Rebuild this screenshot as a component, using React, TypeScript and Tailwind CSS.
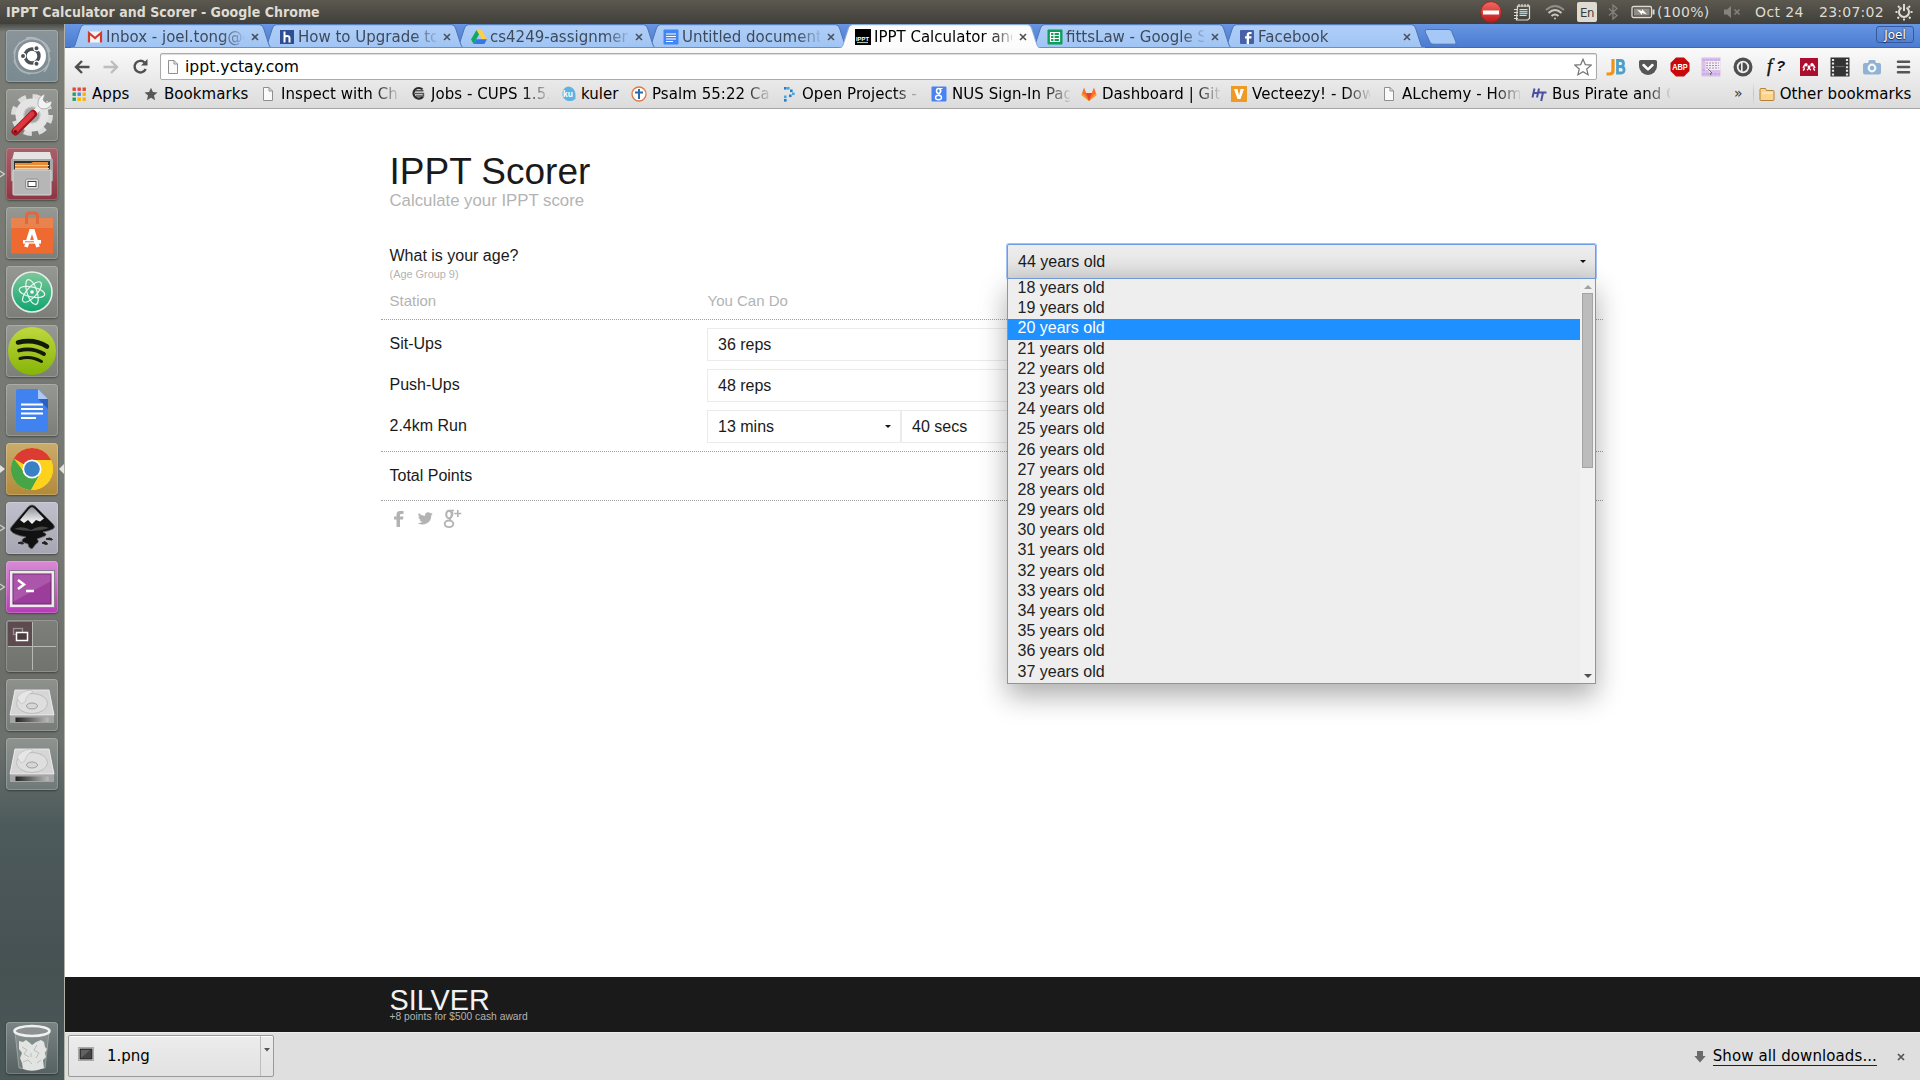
import React from "react";

const svgProps = { xmlns: "http://www.w3.org/2000/svg" };

/* ---------- small shared icons ---------- */
const PageIcon = () => (
  <svg {...svgProps} width="16" height="16" viewBox="0 0 16 16">
    <path d="M3.500 1.500h5.500l3.500 3.500v9.500h-9z" fill="#fafafa" stroke="#8f8f8f" />
    <path d="M9 1.500V5h3.500" fill="none" stroke="#8f8f8f" />
  </svg>
);
const GmailIcon = () => (
  <svg {...svgProps} width="16" height="16" viewBox="0 0 16 16">
    <rect x="1" y="2.500" width="14" height="11" rx="1" fill="#f3f3f3" />
    <path d="M2 13.500V4l6 5 6-5v9.500" fill="none" stroke="#d6382c" strokeWidth="2.200" />
  </svg>
);
const HIcon = () => (
  <svg {...svgProps} width="16" height="16" viewBox="0 0 16 16">
    <rect x="1" y="1" width="14" height="14" fill="#2f4d93" />
    <path d="M5.500 2.500v11M5.500 9q0-2 2.500-2t2.500 2v4.500" fill="none" stroke="#fff" strokeWidth="2" />
  </svg>
);
const DriveIcon = () => (
  <svg {...svgProps} width="16" height="16" viewBox="0 0 16 16">
    <path d="M5.500 1h5L16 10h-5z" fill="#ffcf48" />
    <path d="M5.500 1 8 5.500 2.600 15 0 10.500z" fill="#11a861" />
    <path d="M5.300 10.300H16L13.400 15H2.600z" fill="#3777e3" />
  </svg>
);
const DocIcon = () => (
  <svg {...svgProps} width="16" height="16" viewBox="0 0 16 16">
    <rect x="0.500" y="0.500" width="15" height="15" rx="1" fill="#4285f4" />
    <path d="M3 5h10M3 7.500h10M3 10h10M3 12.500h7" stroke="#fff" strokeWidth="1.200" />
  </svg>
);
const IpptIcon = () => (
  <svg {...svgProps} width="16" height="16" viewBox="0 0 16 16">
    <rect width="16" height="16" fill="#000" />
    <text x="1" y="12" fontSize="6" fontWeight="bold" fill="#fff" fontFamily="Liberation Sans" textLength="13" lengthAdjust="spacingAndGlyphs">IPPT</text>
    <path d="M2 13.500h11" stroke="#bbb" strokeWidth="1.200" />
  </svg>
);
const SheetIcon = () => (
  <svg {...svgProps} width="16" height="16" viewBox="0 0 16 16">
    <rect x="0.500" y="0.500" width="15" height="15" rx="1" fill="#0f9d58" />
    <path d="M3.500 3.500h9v9h-9zM3.500 6.500h9M3.500 9.500h9M7 3.500v9" fill="none" stroke="#fff" strokeWidth="1.200" />
  </svg>
);
const FbIcon = () => (
  <svg {...svgProps} width="16" height="16" viewBox="0 0 16 16">
    <rect x="1" y="1" width="14" height="14" rx="1" fill="#4860a5" />
    <path d="M10 15V9.500h2.300l.3-2.200H10V6q0-1 1.100-1h1.500V3h-2Q7.700 3 7.700 5.700v1.600H6v2.200h1.700V15z" fill="#fff" />
  </svg>
);

/* ---------- bookmark icons ---------- */
const AppsIcon = () => (
  <svg {...svgProps} width="16" height="16" viewBox="0 0 16 16">
    {["#e8453c", "#e8453c", "#e8453c", "#1ba261", "#4688f1", "#f7b500", "#1ba261", "#f7b500", "#f7b500"].map((c, i) => (
      <rect key={i} x={1.5 + (i % 3) * 5} y={1.5 + Math.floor(i / 3) * 5} width="3.400" height="3.400" fill={c} />
    ))}
  </svg>
);
const StarIcon = () => (
  <svg {...svgProps} width="16" height="16" viewBox="0 0 16 16">
    <path d="m8 1.800 1.900 4.300 4.600.4-3.500 3.100 1.100 4.600L8 11.800l-4.100 2.400L5 9.600 1.500 6.500l4.600-.4z" fill="#575757" />
  </svg>
);
const CupsIcon = () => (
  <svg {...svgProps} width="16" height="16" viewBox="0 0 16 16">
    <path d="M12.500 3.500A5.300 5.300 0 1 0 13 10.500" fill="none" stroke="#2a2a2a" strokeWidth="2.200" />
    <path d="M5 4.800h8.500M5 7.500h8.500v2.500H6" fill="none" stroke="#555" strokeWidth="1.400" />
  </svg>
);
const KulerIcon = () => (
  <svg {...svgProps} width="16" height="16" viewBox="0 0 16 16">
    <path d="M8 .5a7.500 7.500 0 0 1 7.500 7.500v5L12 15H8A7.500 7.500 0 0 1 8 .500z" fill="#5eb3e0" />
    <text x="3" y="11" fontSize="8.500" fontWeight="bold" fill="#fff" fontFamily="Liberation Sans">ku</text>
  </svg>
);
const PsalmIcon = () => (
  <svg {...svgProps} width="16" height="16" viewBox="0 0 16 16">
    <circle cx="8" cy="8" r="7" fill="#fff" stroke="#e07842" strokeWidth="1.300" />
    <path d="M8 3v10M4 6.500h8" stroke="#2a6aa8" strokeWidth="2" />
  </svg>
);
const ProjectsIcon = () => (
  <svg {...svgProps} width="16" height="16" viewBox="0 0 16 16">
    {[[3, 1], [6, 1], [9, 3.500], [11, 6.500], [8, 8.500], [3, 9.500], [3, 13]].map(([x, y], i) => (
      <rect key={i} x={x} y={y} width="2.600" height="2.600" fill={i % 2 ? "#48a4e4" : "#2080cf"} />
    ))}
  </svg>
);
const GoogleIcon = () => (
  <svg {...svgProps} width="16" height="16" viewBox="0 0 16 16">
    <rect x="0.500" y="0.500" width="15" height="15" rx="1" fill="#4a83f0" />
    <g fill="none" stroke="#fff">
      <ellipse cx="7.500" cy="5" rx="2" ry="2.400" strokeWidth="1.500" />
      <path d="M7.500 2.500h4M9.500 3.500q1.200 2-.8 3.600-1.200 1-.2 2" strokeWidth="1.100" />
      <ellipse cx="7.500" cy="11.500" rx="3" ry="2.200" strokeWidth="1.400" />
    </g>
  </svg>
);
const GitlabIcon = () => (
  <svg {...svgProps} width="16" height="16" viewBox="0 0 16 16">
    <path d="M3 1.500 5.200 7h5.600L13 1.500 15.500 9 8 15 .5 9z" fill="#fc6d26" />
    <path d="M5.200 7h5.600L8 15z" fill="#e24329" />
    <path d="M.5 9 8 15 2 7.500zM15.500 9 8 15l6-7.500z" fill="#fca326" />
  </svg>
);
const VecIcon = () => (
  <svg {...svgProps} width="16" height="16" viewBox="0 0 16 16">
    <rect width="16" height="16" fill="#ee9a24" />
    <path d="M3 3h3.500L8 9.500 9.500 3H13L9.500 13h-3z" fill="#fff" />
  </svg>
);
const HtIcon = () => (
  <svg {...svgProps} width="16" height="16" viewBox="0 0 16 16" fill="none" stroke="#4a4fa3" strokeWidth="2">
    <path d="M3.500 2.500 1.500 11.500M8 2.500 6 11.500M2.500 7h5M8 6.500h7.500M12 6.500l-1.800 8.500" />
  </svg>
);

const tabs = [
  { title: "Inbox - joel.tong@gmail", icon: <GmailIcon /> },
  { title: "How to Upgrade to", icon: <HIcon /> },
  { title: "cs4249-assignment", icon: <DriveIcon /> },
  { title: "Untitled document", icon: <DocIcon /> },
  { title: "IPPT Calculator and", icon: <IpptIcon />, active: true },
  { title: "fittsLaw - Google Sheets", icon: <SheetIcon /> },
  { title: "Facebook", icon: <FbIcon /> },
];

const bookmarks = [
  { title: "Apps", icon: <AppsIcon />, w: "w-[72px]" },
  { title: "Bookmarks", icon: <StarIcon />, w: "w-[117px]" },
  { title: "Inspect with Chrome", icon: <PageIcon />, w: "w-[150px]", fade: true },
  { title: "Jobs - CUPS 1.5.3", icon: <CupsIcon />, w: "w-[150px]", fade: true },
  { title: "kuler", icon: <KulerIcon />, w: "w-[71px]" },
  { title: "Psalm 55:22 Cast", icon: <PsalmIcon />, w: "w-[150px]", fade: true },
  { title: "Open Projects - A", icon: <ProjectsIcon />, w: "w-[150px]", fade: true },
  { title: "NUS Sign-In Page", icon: <GoogleIcon />, w: "w-[150px]", fade: true },
  { title: "Dashboard | GitLab", icon: <GitlabIcon />, w: "w-[150px]", fade: true },
  { title: "Vecteezy! - Download", icon: <VecIcon />, w: "w-[150px]", fade: true },
  { title: "ALchemy - Home", icon: <PageIcon />, w: "w-[150px]", fade: true },
  { title: "Bus Pirate and Core", icon: <HtIcon />, w: "w-[150px]", fade: true },
];

/* ---------- top panel ---------- */
const SystemPanel = () => (
  <header className="flex h-6 shrink-0 items-center bg-gradient-to-b from-[#5b594f] to-[#403f3a] pl-[6px] text-[#dfdbd2]">
    <span className="font-['DejaVu_Sans_Condensed','DejaVu_Sans',sans-serif] text-sm font-bold leading-6 tracking-[0.03px] whitespace-nowrap [font-stretch:condensed]">
      IPPT Calculator and Scorer - Google Chrome
    </span>
    <div className="ml-auto flex h-6 w-[440px] items-center text-sm tracking-[0.250px] whitespace-nowrap">
      <svg {...svgProps} width="22" height="22" viewBox="0 0 22 22">
        <defs>
          <linearGradient id="stop" x1="0" y1="0" x2="0" y2="1">
            <stop offset="0" stopColor="#ee6a62" />
            <stop offset="1" stopColor="#c01a1a" />
          </linearGradient>
        </defs>
        <circle cx="11" cy="11" r="10.300" fill="url(#stop)" stroke="#b31b1b" strokeWidth=".8" />
        <rect x="3" y="9.500" width="16" height="4" fill="#fff" />
      </svg>
      <svg {...svgProps} className="ml-[11px]" width="18" height="18" viewBox="0 0 18 18">
        <path d="M4.500 3h12v12.500L14.500 17H3.500z" fill="none" stroke="#dfdbd2" strokeWidth="1.200" />
        <path d="M6 1v3M9 1v3M12 1v3M15 1v3" stroke="#dfdbd2" strokeWidth="1.200" />
        <path d="M6.500 6.500h8M6.500 12.500h7" stroke="#dfdbd2" strokeWidth="1" />
        <path d="M6.500 8.500h8M6.500 10.500h8" stroke="#9ed3de" strokeWidth="1.300" />
        <path d="M1 6.500h4M1 9.500h4M1 12.500h4M1 15.500h4" stroke="#dfdbd2" strokeWidth="1" />
      </svg>
      <svg {...svgProps} className="ml-[13px]" width="22" height="18" viewBox="0 0 22 18" fill="none" stroke="#cbc8be" strokeWidth="2">
        <path d="M2 7Q11-1 20 7" stroke="#8f8d85" />
        <path d="M4.500 10Q11 4 17.500 10" />
        <path d="M7.500 13Q11 10 14.500 13" />
        <circle cx="11" cy="15.500" r="1" fill="#cbc8be" stroke="none" />
      </svg>
      <span className="ml-[11px] flex h-5 w-5 items-center justify-center rounded-[2px] bg-[#dfdbd2] text-[13px] leading-none tracking-tight text-[#3c3b37] font-['DejaVu_Sans_Condensed']">
        En
      </span>
      <svg {...svgProps} className="ml-[11px]" width="10" height="16" viewBox="0 0 10 16" fill="none" stroke="#85837b" strokeWidth="1.300">
        <path d="m1 4.500 8 7L5 15V1l4 3.500-8 7" />
      </svg>
      <svg {...svgProps} className="ml-[13px]" width="24" height="14" viewBox="0 0 24 14">
        <rect x="1" y="1.500" width="19.500" height="11" rx="1.500" fill="none" stroke="#dfdbd2" strokeWidth="1.300" />
        <rect x="3" y="3.500" width="15.500" height="7" fill="#908d84" />
        <rect x="21.500" y="4.500" width="2" height="5" fill="#dfdbd2" />
        <path d="m6 4.500 5 1.500V4l5 5.500-5-1.500v2z" fill="#fff" />
      </svg>
      <span className="ml-[2px] w-[58px]">(100%)</span>
      <svg {...svgProps} className="ml-[8px]" width="18" height="14" viewBox="0 0 18 14">
        <path d="M1 4.500h3l4-3.500v12L4 9.500H1z" fill="#85837b" />
        <path d="m11.500 4.500 5 5m0-5-5 5" stroke="#85837b" strokeWidth="1.500" />
      </svg>
      <span className="ml-[14px] w-16 tracking-[0.400px]">Oct 24</span>
      <span className="w-[76px]">23:07:02</span>
      <svg {...svgProps} width="18" height="18" viewBox="0 0 18 18" fill="none" stroke="#dfdbd2">
        <path d="M6.500 4.700a5 5 0 1 0 5 0" strokeWidth="2" />
        <path d="M9 1v7" strokeWidth="2" />
        <path d="M2.500 9H.5M17.500 9h-2M9 15.500V17.500M4 14l-1.500 1.500M14 14l1.500 1.500M3 3l1.600 1.600M15 3l-1.600 1.600" strokeWidth="2" />
      </svg>
    </div>
  </header>
);

/* ---------- launcher ---------- */
const UbuntuArt = () => (
  <g>
    <path d="M8 24C10 6 38 2 44 22M44 28C42 46 14 50 8 30M20 8c20-4 30 20 18 34M14 12c-10 12-6 30 10 32" fill="none" stroke="#fff" strokeOpacity=".35" strokeWidth="1.500" />
    <circle cx="26" cy="26" r="14" fill="#fff" />
    <circle cx="26" cy="26" r="7" fill="none" stroke="#4a5258" strokeWidth="3.400" />
    <g fill="#4a5258" stroke="#fff" strokeWidth="1.200">
      <circle cx="17" cy="26" r="2.600" />
      <circle cx="30.500" cy="18.200" r="2.600" />
      <circle cx="30.500" cy="33.800" r="2.600" />
    </g>
  </g>
);
const SettingsArt = () => (
  <g>
    <circle cx="26" cy="26" r="18.500" fill="none" stroke="#dcdcdc" strokeWidth="5" strokeDasharray="8 6.530" />
    <circle cx="26" cy="26" r="12.500" fill="#b9b9b9" stroke="#e4e4e4" strokeWidth="8" />
    <circle cx="26" cy="26" r="8" fill="#a5a5a5" stroke="#c9c9c9" />
    <path d="m25 27 11-11" stroke="#eee" strokeWidth="5" />
    <path d="M32 13q1-6 7-8l-2 6 3 3 6-2q-1 8-9 8-6-1-5-7z" fill="#f2f2f2" stroke="#999" strokeWidth=".7" />
    <path d="M9.500 42.500 27 25" stroke="#a8141c" strokeWidth="8" strokeLinecap="round" />
    <path d="M9.500 41.500 26 25" stroke="#da3840" strokeWidth="5" strokeLinecap="round" />
    <circle cx="9.500" cy="42.500" r="1.600" fill="#6d0c10" />
  </g>
);
const FilesArt = () => (
  <g>
    <path d="M8 4h36l3 12H5z" fill="#e4e4e4" />
    <rect x="5" y="11" width="42" height="22" fill="#a8a8a8" />
    <rect x="8" y="13" width="36" height="10" fill="#33302c" />
    <path d="M9 15h16l2-1h15v9H9z" fill="#e88b37" />
    <path d="M9 17.500h34M9 20.500h34" stroke="#fbd5a8" />
    <rect x="7" y="22" width="38" height="25" rx="1" fill="#b6b6b6" stroke="#d9d9d9" />
    <rect x="19.500" y="31" width="13" height="10" rx="2" fill="#ddd" stroke="#909090" />
    <rect x="22" y="33.500" width="8" height="5" fill="#fff" stroke="#444" />
  </g>
);
const SoftwareArt = () => (
  <g>
    <path d="M5 11h42v35.500H5z" fill="#ef6a30" />
    <path d="M5 11h42v10H5z" fill="#e8824f" />
    <path d="M20.500 17V9q0-3 3-3h5q3 0 3 3v8" fill="none" stroke="#e0683c" strokeWidth="3" />
    <path d="m20 40 5-16h2l5 16" fill="none" stroke="#fff" strokeWidth="3.800" />
    <rect x="17" y="33" width="18" height="3.600" fill="#fff" />
    <path d="M19 34.800h9" stroke="#ef6a30" />
  </g>
);
const AtomArt = () => (
  <g>
    <circle cx="26" cy="26" r="20" fill="url(#atom)" stroke="#e8eeea" strokeWidth="1.600" />
    <g fill="none" stroke="#e6f7ee" strokeWidth="1.200">
      <ellipse cx="26" cy="26" rx="13" ry="5" transform="rotate(12 26 26)" />
      <ellipse cx="26" cy="26" rx="13" ry="5" transform="rotate(72 26 26)" />
      <ellipse cx="26" cy="26" rx="13" ry="5" transform="rotate(132 26 26)" />
    </g>
    <circle cx="26" cy="26" r="1.800" fill="#fff" />
  </g>
);
const SpotifyArt = () => (
  <g>
    <circle cx="26" cy="26" r="24" fill="url(#spot)" />
    <g fill="none" stroke="#141a05" strokeLinecap="round">
      <path d="M12 17.500q16-4 29 4" strokeWidth="4.600" />
      <path d="M13 25.500q13-3.500 25 3.500" strokeWidth="3.800" />
      <path d="M14 33.500q11-3 21.500 3" strokeWidth="3" />
    </g>
  </g>
);
const DocsArt = () => (
  <g>
    <path d="M12 5h20l10 10v31q0 1.500-1.500 1.500h-29Q10 47.500 10 46V7q0-2 2-2z" fill="#3f82f0" />
    <path d="M32 5l10 10H32z" fill="#a9c8fb" />
    <path d="M32 15h10v10z" fill="#2a62c4" />
    <path d="M15 20.500h22M15 25h22M15 29.500h22M15 34h15" stroke="#fff" strokeWidth="2.200" />
  </g>
);
const ChromeArt = () => (
  <g>
    <circle cx="26" cy="26" r="21" fill="#fdd21c" />
    <path d="M26 26 7.800 15.500a21 21 0 0 1 36.400 0L45 17H26z" fill="#db3b32" />
    <path d="M7.800 15.500A21 21 0 0 0 25 47l9.500-17L26 26l-8 3z" fill="#46a546" />
    <path d="M45 17H26l8 14-9 16A21 21 0 0 0 45 17z" fill="#fdd21c" />
    <circle cx="26" cy="26" r="9.600" fill="#fff" />
    <circle cx="26" cy="26" r="7.800" fill="#3b7fc4" />
  </g>
);
const InkscapeArt = () => (
  <g>
    <path d="M26 3q2 0 4 2l17 17q3 3 0 5-4 2-10 3 5 2 2 4l-8 3q3 3-1 5l-4 5q-4-1-4-5l-6-2q-1-3 4-5-12-2-15-6-2-2 1-5L22 5q2-2 4-2z" fill="#111" stroke="#666" strokeWidth=".8" />
    <path d="M26 5q1 0 3 2l9 9.500-4 3-4-1.500-4 4-4-4-4 3-4-3 9-11q2-2 3-2z" fill="url(#peak)" />
    <path d="M8 27q8-4 17 1 10-6 18-2-8 3-17 3T8 27z" fill="#444" />
    <path d="M12 41q3-2 5 0t-5 0zM36 41q3-3 5 0t-5 0zM40 37q4-2 6 0t-6 0z" fill="#222" stroke="#222" />
  </g>
);
const TerminalArt = () => (
  <g>
    <rect x="3.500" y="9.500" width="45" height="37" fill="#f0e7f0" stroke="#8b7c8b" />
    <rect x="7" y="13" width="38" height="30" fill="#9b3d9b" stroke="#6b296b" />
    <path d="M7.500 13.500h37v7l-37 20z" fill="#b668b6" opacity=".6" />
    <path d="m12 19 6 4.500-6 4.500M20 30h8" fill="none" stroke="#fff" strokeWidth="2.500" />
  </g>
);
const WorkspaceArt = () => (
  <g>
    <rect x="2" y="2" width="24" height="24" fill="#5d4b50" />
    <path d="M26.500 2v48M2 26.500h48" stroke="#b9b9b4" strokeWidth="1" />
    <rect x="7.500" y="8.500" width="9" height="6" fill="none" stroke="#9c9094" strokeWidth="1.300" />
    <rect x="10.500" y="12.500" width="11" height="8" fill="#4b3b40" stroke="#fff" strokeWidth="1.500" />
  </g>
);
const DriveArt = () => (
  <g>
    <path d="M9 11h34l5 25v8H4v-8z" fill="#bdbdbd" />
    <path d="M9 11h34l5 25H4z" fill="#d6d6d6" stroke="#f2f2f2" strokeWidth=".8" />
    <ellipse cx="26" cy="24.500" rx="15.500" ry="10" fill="#dedede" stroke="#bcbcbc" />
    <ellipse cx="26" cy="27" rx="5.500" ry="3" fill="#d6d6d6" stroke="#9e9e9e" />
    <path d="M11 19q4-7 14-8l2 2q-7 3-8 10l-4 2z" fill="#e6e6e6" stroke="#bababa" strokeWidth=".6" />
    <path d="M4 36.500h44v7.500H4z" fill="#a5a5a5" />
    <path d="M9.500 38.500h33V43h-33z" fill="url(#slot)" />
  </g>
);
const TrashArt = () => (
  <g>
    <path d="m9 10 4 36q13 3 26 0l4-36z" fill="#fff" fillOpacity=".15" stroke="#a8adad" strokeWidth=".8" />
    <path d="m13 19 4 1 3-2 4 3 2 2 4-3 5-2 3 2 1 5 2 2-2 4 1 4-3 3 1 8-6 2q-8 2-15-1l-1-6-2-5 2-5-3-4z" fill="#e2e4e1" />
    <path d="m16 25 5 3-3 4 5 3M31 23l-3 5 5 3-3 5M17 40l5-2 4 4M31 41l4-3M25 31v4" fill="none" stroke="#b9bdb9" strokeWidth="1" />
    <ellipse cx="26" cy="9" rx="17.500" ry="5" fill="#8c9292" stroke="#f0f0ee" strokeWidth="2.600" />
  </g>
);

const tiles = [
  { art: <UbuntuArt />, bg: "from-[#8a9499] to-[#798a91]" },
  { art: <SettingsArt />, bg: "from-[#969893] to-[#7b7e79]" },
  { art: <FilesArt />, bg: "from-[#a8606a] to-[#8e3543]", open: true },
  { art: <SoftwareArt />, bg: "from-[#969893] to-[#7b7e79]" },
  { art: <AtomArt />, bg: "from-[#969893] to-[#7b7e79]" },
  { art: <SpotifyArt />, bg: "from-[#969893] to-[#7b7e79]" },
  { art: <DocsArt />, bg: "from-[#969893] to-[#7b7e79]" },
  { art: <ChromeArt />, bg: "from-[#cbac6c] to-[#b28a3a]", focus: true },
  { art: <InkscapeArt />, bg: "from-[#c0c1cc] to-[#a5a6b1]", open: true },
  { art: <TerminalArt />, bg: "from-[#d88ad6] to-[#b43cb4]", open: true },
  { art: <WorkspaceArt />, bg: "from-[#7d7f7a] to-[#71736e]" },
  { art: <DriveArt />, bg: "from-[#8e918c] to-[#787d79]" },
  { art: <DriveArt />, bg: "from-[#8e938f] to-[#6f7a78]" },
];

const Tile = ({ art, bg, open, focus }: { art: React.ReactNode; bg: string; open?: boolean; focus?: boolean }) => (
  <div className="flex h-[52px] w-full items-center">
    <svg {...svgProps} width="6" height="12" viewBox="0 0 6 12">
      {open && <path d="M-1 2.500 4.500 6-1 9.500" fill="none" stroke="#d6d6d2" strokeWidth="1.200" />}
      {focus && <path d="M0 2 5 6 0 10z" fill="#e2e2de" />}
    </svg>
    <div className={`h-[52px] w-[52px] overflow-hidden rounded-[4px] bg-gradient-to-b ring-1 ring-inset ring-white/20 shadow-[0_1px_2px_rgba(0,0,0,0.4)] ${bg}`}>
      <svg {...svgProps} width="52" height="52" viewBox="0 0 52 52">{art}</svg>
    </div>
    {focus && (
      <svg {...svgProps} width="6" height="12" viewBox="0 0 6 12">
        <path d="M6 1 1 6l5 5z" fill="#e2e2de" />
      </svg>
    )}
  </div>
);

const Launcher = () => (
  <aside className="flex w-[65px] shrink-0 flex-col gap-[7px] border-r border-[#b3b0a6] bg-[linear-gradient(to_bottom,#4a4c48_0,#797d76_8px,#757872_50%,#6c6e69_62%,#6b716d_68%,#4d5a5b_76%,#465152_90%,#4b5858_100%)] pt-[6px] pb-[6px]">
    <svg {...svgProps} width="0" height="0" className="absolute">
      <defs>
        <linearGradient id="atom" x1="0" y1="0" x2="0" y2="1">
          <stop offset="0" stopColor="#7fc89a" />
          <stop offset="1" stopColor="#0ea470" />
        </linearGradient>
        <linearGradient id="spot" x1="0" y1="0" x2="0" y2="1">
          <stop offset="0" stopColor="#bfd83c" />
          <stop offset="1" stopColor="#86b408" />
        </linearGradient>
        <linearGradient id="peak" x1="0" y1="0" x2="0" y2="1">
          <stop offset="0" stopColor="#8d9198" />
          <stop offset="1" stopColor="#fff" />
        </linearGradient>
        <linearGradient id="slot">
          <stop offset="0" stopColor="#222" />
          <stop offset="1" stopColor="#bbb" />
        </linearGradient>
      </defs>
    </svg>
    {tiles.map((t, i) => (
      <Tile key={i} {...t} />
    ))}
    <div className="mt-auto">
      <Tile art={<TrashArt />} bg="from-[#7b8484] to-[#566162]" />
    </div>
  </aside>
);

/* ---------- browser chrome ---------- */
const Tab = ({ title, icon, active, z }: { title: string; icon: React.ReactNode; active?: boolean; z: number }) => (
  <div className="relative -mr-[10px] h-6 w-[202px] shrink-0" style={{ zIndex: active ? 20 : z }}>
    <svg {...svgProps} className="absolute inset-0" width="202" height="24" viewBox="0 0 202 24">
      <defs>
        <linearGradient id="tabfill" x1="0" y1="0" x2="0" y2="1">
          <stop offset="0" stopColor="#b0cff8" />
          <stop offset="1" stopColor="#9fc4f4" />
        </linearGradient>
      </defs>
      <path
        d="M0 24.500Q3 24 4 21L9.500 4Q10.500.7 13.500.7h175Q191.500.7 192.500 4L198 21q1 3 4 3.500"
        fill={active ? "#fcfcfc" : "url(#tabfill)"}
        stroke={active ? "#8aa9dc" : "#4e74b5"}
        strokeWidth="1"
      />
      {!active && <path d="M0 23.500h202" stroke="#6f8fbd" />}
    </svg>
    <div className="relative flex h-full items-center pt-px pl-4">
      {icon}
      <span
        className={`ml-[3px] h-[22px] w-[138px] overflow-hidden text-[15px] leading-[23px] whitespace-nowrap [mask-image:linear-gradient(to_right,#000_116px,transparent_142px)] ${active ? "text-black" : "text-[#3e4a5c]"}`}
      >
        {title}
      </span>
      <svg {...svgProps} className="ml-[6px]" width="10" height="10" viewBox="0 0 10 10">
        <path d="m2 2 6 6m0-6L2 8" stroke="#4a4f58" strokeWidth="1.600" />
      </svg>
    </div>
  </div>
);

const TabStrip = () => (
  <div className="flex h-6 bg-gradient-to-b from-[#6795e3] to-[#4a7bd0] pl-[6px] shadow-[inset_0_-1px_0_#3f68ad]">
    {tabs.map((t, i) => (
      <Tab key={t.title} {...t} z={10 - i} />
    ))}
    <svg {...svgProps} className="mt-[5px] ml-[9px]" width="33" height="16" viewBox="0 0 33 16">
      <path d="M3 .5h22q2 0 2.700 2L32 13q.5 2.200-1.500 2.200H9q-2 0-3-2L1.200 3Q.5.5 3 .5z" fill="#a6c8f6" stroke="#4e74b5" />
    </svg>
    <div className="mt-[2px] mr-[6px] ml-auto flex h-[17px] w-[38px] items-center justify-center rounded-[3px] border border-[#35599c] pt-px text-[12px] leading-none text-white [text-shadow:0_0_2px_#1b2f55,0_1px_1px_#1b2f55]">
      Joel
    </div>
  </div>
);

const Extensions = () => (
  <div className="flex h-5 w-[306px] items-center justify-between">
    <svg {...svgProps} width="20" height="20" viewBox="0 0 20 20" fill="none" strokeWidth="3.200">
      <path d="M7 2v11.500Q7 17 3.500 17H.5" stroke="#ef9414" />
      <path d="M11.500 3.500h3q3 0 3 2.900t-3 3h-3zM11.500 9.500h3.300q3.300 0 3.300 3.300t-3.300 3.200h-3.300z" stroke="#4ba0cc" strokeWidth="2.800" />
    </svg>
    <svg {...svgProps} width="20" height="20" viewBox="0 0 20 20">
      <path d="M2.500 3h15q1.500 0 1.500 1.500V9a9 9 0 0 1-18 0V4.500Q1 3 2.500 3z" fill="#565656" />
      <path d="m5.500 8 4.500 4.300L14.500 8" fill="none" stroke="#fff" strokeWidth="2.500" strokeLinecap="round" strokeLinejoin="round" />
    </svg>
    <svg {...svgProps} width="20" height="20" viewBox="0 0 20 20">
      <path d="M6 .5h8L19.500 6v8L14 19.500H6L.5 14V6z" fill="#c90909" />
      <text x="2.200" y="13.200" fontSize="8.500" fontWeight="bold" fill="#fff" fontFamily="Liberation Sans" textLength="15.500" lengthAdjust="spacingAndGlyphs">ABP</text>
    </svg>
    <svg {...svgProps} width="20" height="20" viewBox="0 0 20 20">
      <rect x=".5" y=".5" width="19" height="19" fill="#d9c0ec" />
      <path d="M1 3h18M1 17h18M1 13h4" stroke="#ccaee4" strokeWidth="2" strokeDasharray="3 1" />
      <rect x="4.500" y="4" width="15" height="9" fill="#f3ecf8" />
      <path d="M5 6h13M5 8.500h13M5 11h13" stroke="#999" strokeDasharray="2 1" />
      <path d="m7 12 4 4-2 .3 1 2" fill="#fff" stroke="#555" strokeWidth=".8" />
    </svg>
    <svg {...svgProps} width="20" height="20" viewBox="0 0 20 20">
      <circle cx="10" cy="10" r="9.500" fill="#4f4f4f" />
      <circle cx="10" cy="10" r="5.300" fill="none" stroke="#efefef" strokeWidth="1.800" />
      <path d="M8.800 5v10" stroke="#efefef" strokeWidth="1.600" />
    </svg>
    <svg {...svgProps} width="22" height="20" viewBox="0 0 22 20">
      <text x="2" y="15" fontSize="19" fontStyle="italic" fill="#111" stroke="#111" strokeWidth=".4" fontFamily="Liberation Serif">f</text>
      <text x="11" y="14" fontSize="15" fontStyle="italic" fontWeight="bold" fill="#111" fontFamily="Liberation Sans">?</text>
    </svg>
    <svg {...svgProps} width="20" height="20" viewBox="0 0 20 20">
      <rect x="1" y="1" width="18" height="18" fill="#ac0f2d" />
      <path d="M4 13.500q1.500-1 1.500-3M16 13.500q-1.500-1-1.500-3M8 13q2-1 2-3 0 2 2 3" fill="none" stroke="#fff" strokeWidth="1.400" />
      <circle cx="7" cy="7.800" r="1.700" fill="#fff" />
      <circle cx="13" cy="7.800" r="1.700" fill="#fff" />
      <circle cx="10" cy="9.800" r="1.500" fill="#fff" />
      <path d="M4 11q1-3 3-3M16 11q-1-3-3-3" fill="none" stroke="#fff" strokeWidth="1.300" />
    </svg>
    <svg {...svgProps} width="20" height="20" viewBox="0 0 20 20">
      <rect x=".5" y=".5" width="19" height="19" fill="#333" />
      <path d="M3 2v17M17 2v17" stroke="#e6e6e6" strokeWidth="2.200" strokeDasharray="2 1.600" />
      <path d="M5.500 9.500h9" stroke="#666" />
    </svg>
    <svg {...svgProps} width="20" height="20" viewBox="0 0 20 20">
      <path d="M3 6h3l1-3h6l1 3h3q2 0 2 2v7.500q0 2-2 2H3q-2 0-2-2V8q0-2 2-2z" fill="#90b2d5" />
      <circle cx="10" cy="11" r="3.300" fill="none" stroke="#f3f6fa" strokeWidth="2.200" />
    </svg>
    <svg {...svgProps} width="18" height="18" viewBox="0 0 18 18">
      <path d="M4 3.800h11M4 9h11M4 14.200h11" stroke="#555" strokeWidth="2.600" strokeLinecap="round" />
    </svg>
  </div>
);

const Toolbar = () => (
  <div className="flex h-[61px] flex-col border-b border-[#a5a5a5] bg-gradient-to-b from-[#fafafa] to-[#dcdcdc]">
    <div className="mt-[5px] flex h-[27px] items-center">
      <svg {...svgProps} className="ml-2" width="18" height="18" viewBox="0 0 18 18" fill="none" stroke="#505050" strokeWidth="2.400">
        <path d="M16.500 9H3M9 3 3 9l6 6" />
      </svg>
      <svg {...svgProps} className="ml-[11px]" width="18" height="18" viewBox="0 0 18 18" fill="none" stroke="#bdbdbd" strokeWidth="2.400">
        <path d="M1.500 9H15M9 3l6 6-6 6" />
      </svg>
      <svg {...svgProps} className="ml-3" width="18" height="18" viewBox="0 0 18 18">
        <path d="M13.700 11A5.800 5.800 0 1 1 12.500 4.500" fill="none" stroke="#505050" strokeWidth="2.400" />
        <path d="M15.500 1v6.500H9z" fill="#505050" />
      </svg>
      <div className="ml-[10px] flex h-[27px] w-[1437px] items-center rounded-[2px] border border-[#aaa] bg-white pr-1 pl-1 shadow-[inset_0_1px_1px_#ddd]">
        <PageIcon />
        <span className="ml-1 pt-[2px] text-[15.600px] leading-[23px] text-black">ippt.yctay.com</span>
        <svg {...svgProps} className="ml-auto" width="18" height="18" viewBox="0 0 18 18">
          <path d="m9 1.200 2.300 5.400 5.900.5-4.500 3.900 1.400 5.700L9 13.700l-5.100 3 1.400-5.700L.8 7.100l5.900-.5z" fill="#fff" stroke="#757575" strokeWidth="1.200" />
        </svg>
      </div>
      <div className="ml-[9px]">
        <Extensions />
      </div>
    </div>
    <div className="flex h-[27px] items-center pl-[6px] text-[15px] tracking-[0.050px] text-black">
      {bookmarks.map((b) => (
        <div key={b.title} className={`flex shrink-0 items-center ${b.w}`}>
          {b.icon}
          <span
            className={`ml-[5px] overflow-hidden leading-[22px] whitespace-nowrap ${b.fade ? "w-[118px] [mask-image:linear-gradient(to_right,#000_92px,transparent_120px)]" : ""}`}
          >
            {b.title}
          </span>
        </div>
      ))}
      <span className="ml-[53px] pb-px text-[14px] text-[#333]">»</span>
      <span className="ml-[10px] h-6 w-px bg-gradient-to-b from-transparent via-[#bcc4cc] to-transparent" />
      <svg {...svgProps} className="ml-[5px]" width="16" height="16" viewBox="0 0 16 16">
        <path d="M1 13.500v-10Q1 2.500 2 2.500h4.500l1 2H14q1 0 1 1v8q0 1-1 1H2q-1 0-1-1z" fill="#fbd58d" stroke="#b58237" />
        <path d="M3 7h11" stroke="#fff1cf" />
      </svg>
      <span className="ml-[5px] leading-[22px] tracking-[0.100px] whitespace-nowrap">Other bookmarks</span>
    </div>
  </div>
);

/* ---------- page ---------- */
const Caret = () => (
  <svg {...svgProps} width="6" height="3" viewBox="0 0 6 3">
    <path d="M0 0h6L3 3z" fill="#111" />
  </svg>
);

const SelectBox = ({ value, className, caret }: { value: string; className: string; caret?: boolean }) => (
  <div className={`flex h-[33px] items-center justify-between border border-[#ebebeb] bg-white pr-[9px] pl-[10px] leading-5 ${className}`}>
    <span>{value}</span>
    {caret && <Caret />}
  </div>
);

const Row = ({ label, children }: { label: string; children: React.ReactNode }) => (
  <div className="flex h-[33px]">
    <div className="w-[317px] pt-[6px] pl-[8.500px] leading-5">{label}</div>
    <div className="flex pl-[9px]">{children}</div>
  </div>
);

const ages = Array.from({ length: 20 }, (_, i) => 18 + i);

const AgeSelect = () => (
  <div className="relative z-10 mr-[7px] w-[589px]">
    <div className="flex h-[35px] items-center justify-between rounded-[2px] border border-[#6f9be0] bg-gradient-to-b from-[#eeeeee] via-[#e6e6e6] to-[#d6d6d6] pr-[9px] pl-[10px] leading-5 shadow-[0_0_0_1px_#a3c2f5]">
      <span>44 years old</span>
      <Caret />
    </div>
    <div className="absolute top-[34px] left-0 flex h-[406px] w-[589px] border border-[#7099d6] bg-[#eeeeee] shadow-[0_12px_26px_rgba(0,0,0,0.32)]">
      <div className="flex-1 overflow-hidden">
        {ages.map((age) => (
          <div
            key={age}
            className={`h-[20.200px] pl-[9.500px] leading-[18px] ${age === 20 ? "bg-[#1e90ff] text-white" : "text-[#222]"}`}
          >
            {age} years old
          </div>
        ))}
      </div>
      <div className="flex w-[15px] flex-col items-center bg-[#f1f1f1] pt-[6px] pb-[5px]">
        <svg {...svgProps} width="8" height="4" viewBox="0 0 8 4">
          <path d="M0 4h8L4 0z" fill="#a0a0a0" />
        </svg>
        <div className="mt-1 h-[175px] w-[11px] border border-[#a3a3a3] bg-[#bcbcbc]" />
        <svg {...svgProps} className="mt-auto" width="8" height="4" viewBox="0 0 8 4">
          <path d="M0 0h8L4 4z" fill="#505050" />
        </svg>
      </div>
    </div>
  </div>
);

const Page = () => (
  <main className="h-[868px] bg-white pt-[43px] pl-[316px] font-['Liberation_Sans',Arial,sans-serif] text-base text-[#1a1a1a]">
    <div className="w-[1222px]">
      <div className="pl-[8.500px]">
        <h1 className="text-[37px] leading-10">IPPT Scorer</h1>
        <p className="text-[16.800px] leading-[18px] text-[#b3b3b3]">Calculate your IPPT score</p>
      </div>
      <div className="mt-[34px] flex h-[37px] justify-between">
        <div className="pt-[2px] pl-[8.500px]">
          <div className="leading-5">What is your age?</div>
          <div className="mt-px text-[10.900px] leading-[14px] text-[#b3b3b3]">(Age Group 9)</div>
        </div>
        <AgeSelect />
      </div>
      <div className="flex h-[39px] border-b border-dotted border-[#a0a0a0] pt-[11px] text-[15px] leading-[18px] text-[#b3b3b3]">
        <div className="w-[326.500px] pl-[8.500px]">Station</div>
        <div>You Can Do</div>
      </div>
      <div className="flex h-[132px] flex-col gap-2 border-b border-dotted border-[#a0a0a0] pt-2">
        <Row label="Sit-Ups">
          <SelectBox value="36 reps" className="w-[600px]" />
        </Row>
        <Row label="Push-Ups">
          <SelectBox value="48 reps" className="w-[600px]" />
        </Row>
        <Row label="2.4km Run">
          <SelectBox value="13 mins" className="w-[194px]" caret />
          <SelectBox value="40 secs" className="w-[406px]" />
        </Row>
      </div>
      <div className="h-[49px] border-b border-dotted border-[#a0a0a0] pt-[14px] pl-[8.500px] leading-5">Total Points</div>
      <div className="flex h-[18px] items-center pt-2 pl-3">
        <svg {...svgProps} className="mt-[10px]" width="12" height="18" viewBox="0 0 12 18">
          <path d="M3.500 17V9.500H1V6.500h2.500V4.500Q3.500 1 7 1h3.500v3H8.300Q7 4 7 5v1.500h3.500L10 9.500H7V17z" fill="#b3b3b3" />
        </svg>
        <svg {...svgProps} className="mt-[9px] ml-[13px]" width="15" height="13" viewBox="0 0 24 20">
          <path
            d="M23.600 2.300a9.600 9.600 0 0 1-2.800.8A4.900 4.900 0 0 0 23 .4a9.700 9.700 0 0 1-3.100 1.200 4.900 4.900 0 0 0-8.400 4.500A13.900 13.900 0 0 1 1.400 1a4.900 4.900 0 0 0 1.500 6.500 4.900 4.900 0 0 1-2.200-.6 4.900 4.900 0 0 0 3.900 4.900 4.900 4.900 0 0 1-2.200.1 4.900 4.900 0 0 0 4.600 3.400A9.900 9.900 0 0 1-.3 17.300 13.900 13.900 0 0 0 21.200 4.900a10 10 0 0 0 2.400-2.600z"
            fill="#b3b3b3"
          />
        </svg>
        <svg {...svgProps} className="mt-[9px] ml-[10px]" width="20" height="20" viewBox="0 0 20 20" fill="none" stroke="#b3b3b3">
          <ellipse cx="6" cy="5.500" rx="2.800" ry="3.700" strokeWidth="2" />
          <path d="M6.500 1.500h4.500M8.800 2.500q2 3-1 6-2 1.500 0 3" strokeWidth="1.600" />
          <ellipse cx="6" cy="14.800" rx="4.300" ry="3.300" strokeWidth="1.900" />
          <path d="M14.800 1v7M11.300 4.500h7" strokeWidth="1.600" />
        </svg>
      </div>
    </div>
  </main>
);

const AwardBar = () => (
  <section className="h-[55px] bg-[#1a1a1a] pt-2 pl-[324.500px] font-['Liberation_Sans',Arial,sans-serif]">
    <div className="text-[28.800px] leading-[30px] text-[#f2f2f2]">SILVER</div>
    <div className="-mt-[5px] text-[10.300px] leading-[14px] text-[#b3b3b3]">+8 points for $500 cash award</div>
  </section>
);

const DownloadBar = () => (
  <footer className="flex h-12 items-center border-t border-[#ececec] bg-[#dfdfdf] text-[15px] text-black">
    <div className="mb-px ml-[3px] flex h-[42px] w-[206px] rounded-[2px] border border-[#9a9a9a] bg-gradient-to-b from-[#ececec] to-[#e2e2e2] shadow-[inset_0_1px_0_#fff]">
      <div className="flex w-[192px] items-center border-r border-[#bdbdbd] pl-[9px]">
        <svg {...svgProps} className="mb-[5px]" width="16" height="14" viewBox="0 0 16 14">
          <rect x=".5" y=".5" width="15" height="13" fill="#f2f2f2" stroke="#aaa" />
          <rect x="2" y="2" width="12" height="10" fill="#444" stroke="#222" />
          <path d="M3 11V3h9z" fill="#777" opacity=".6" />
        </svg>
        <span className="ml-[13px] pt-px">1.png</span>
      </div>
      <div className="w-3 pt-3 pl-[3px]">
        <svg {...svgProps} width="6" height="4" viewBox="0 0 6 4">
          <path d="M0 0h6L3 3.500z" fill="#555" />
        </svg>
      </div>
    </div>
    <svg {...svgProps} className="mr-[7px] ml-auto" width="12" height="13" viewBox="0 0 12 13">
      <path d="M3 1h6v5h2.700L6 12.500.3 6H3z" fill="#6a6a6a" />
    </svg>
    <span className="mr-[19px] border-b border-[#222] leading-[17px] tracking-[0.100px] whitespace-nowrap">Show all downloads...</span>
    <svg {...svgProps} className="mr-[14px]" width="10" height="10" viewBox="0 0 10 10">
      <path d="m2 2 6 6m0-6L2 8" stroke="#555" strokeWidth="1.700" />
    </svg>
  </footer>
);

export default function App() {
  return (
    <div className="flex h-[1080px] w-[1920px] flex-col overflow-hidden bg-white font-['DejaVu_Sans',sans-serif]">
      <SystemPanel />
      <div className="flex min-h-0 flex-1">
        <Launcher />
        <div className="flex w-[1855px] flex-col">
          <TabStrip />
          <Toolbar />
          <Page />
          <AwardBar />
          <DownloadBar />
        </div>
      </div>
    </div>
  );
}
